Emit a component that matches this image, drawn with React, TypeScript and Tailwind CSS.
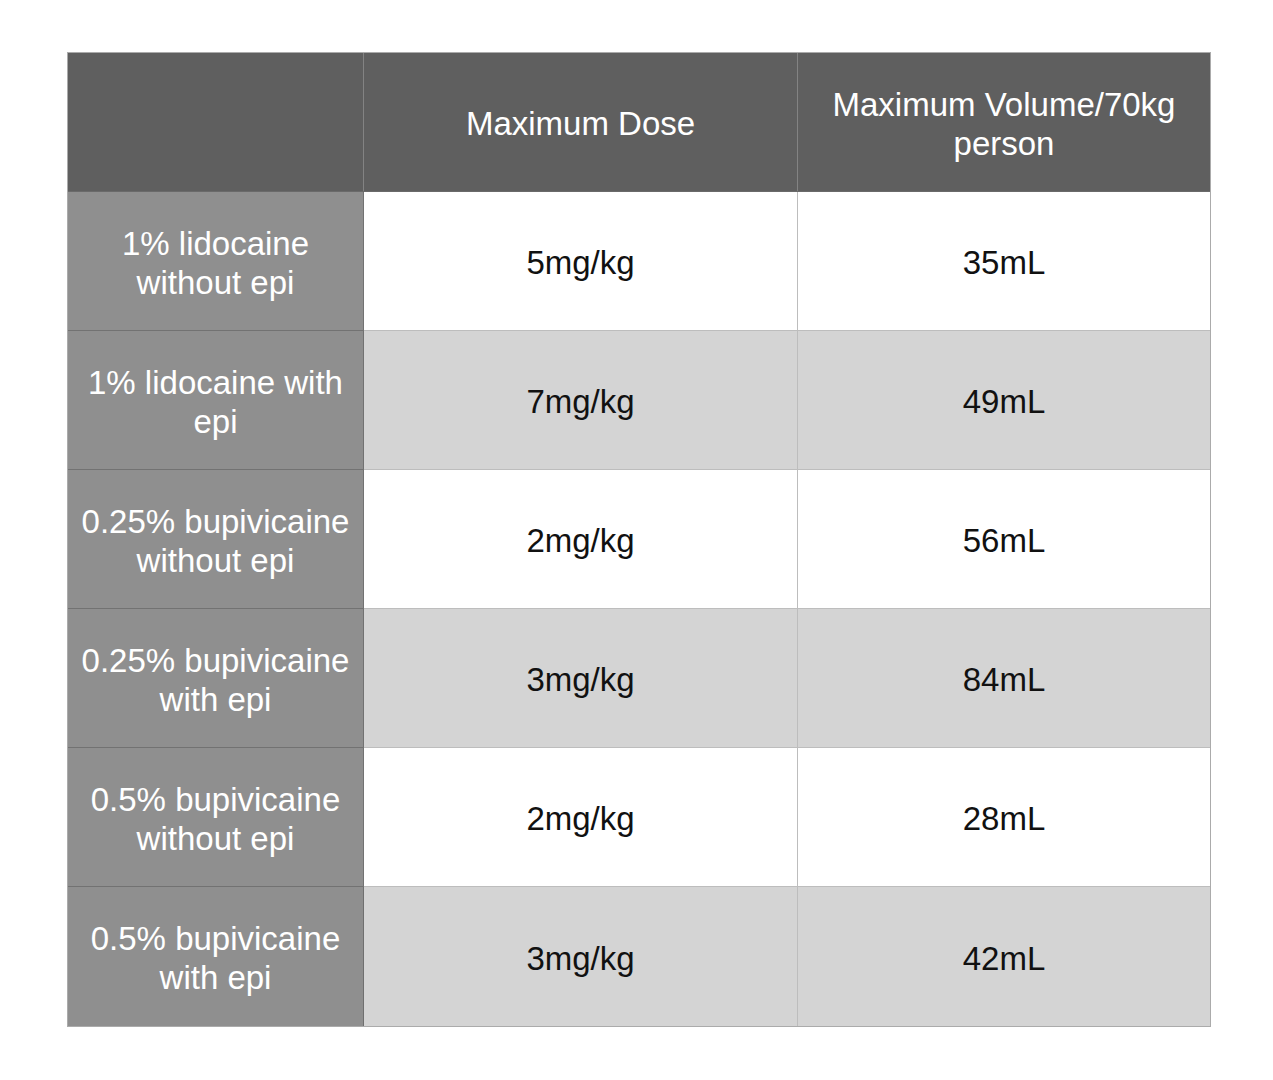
const rows = [
  { name: ['1% lidocaine', 'without epi'], dose: '5mg/kg', volume: '35mL' },
  { name: ['1% lidocaine with', 'epi'], dose: '7mg/kg', volume: '49mL' },
  { name: ['0.25% bupivicaine', 'without epi'], dose: '2mg/kg', volume: '56mL' },
  { name: ['0.25% bupivicaine', 'with epi'], dose: '3mg/kg', volume: '84mL' },
  { name: ['0.5% bupivicaine', 'without epi'], dose: '2mg/kg', volume: '28mL' },
  { name: ['0.5% bupivicaine', 'with epi'], dose: '3mg/kg', volume: '42mL' },
];

export default function App() {
  return (
    <div
      className="min-h-screen w-[1273px] h-[1080px] bg-white pt-[52px] pl-[67px]"
      style={{ fontFamily: '"Liberation Sans", Arial, sans-serif' }}
    >
      <div className="w-[1144px] border border-[#ababab] text-[33px] leading-[39px] text-center">
        {/* Header */}
        <div className="grid grid-cols-[296px_434px_1fr] h-[139px] bg-[#5f5f5f] text-white border-b border-[#6a6a6a]">
          <div className="border-r border-[#838383]" />
          <div className="flex items-center justify-center pt-[3px] border-r border-[#838383]">
            Maximum Dose
          </div>
          <div className="flex flex-col items-center justify-center pt-[3px] whitespace-nowrap">
            <span>Maximum Volume/70kg</span>
            <span>person</span>
          </div>
        </div>

        {/* Body */}
        {rows.map((row, i) => {
          const last = i === rows.length - 1;
          const striped = i % 2 === 1;
          return (
            <div key={i} className="grid grid-cols-[296px_434px_1fr] h-[139px]">
              <div
                className={`flex flex-col items-center justify-center pt-[3px] bg-[#8f8f8f] text-white whitespace-nowrap border-r border-[#6f6f6f] ${last ? '' : 'border-b border-[#727272]'}`}
              >
                <span>{row.name[0]}</span>
                <span>{row.name[1]}</span>
              </div>
              <div
                className={`flex items-center justify-center pt-[3px] text-[#111111] border-r border-[#bdbdbd] ${striped ? 'bg-[#d4d4d4]' : 'bg-white'} ${last ? '' : 'border-b border-b-[#bdbdbd]'}`}
              >
                {row.dose}
              </div>
              <div
                className={`flex items-center justify-center pt-[3px] text-[#111111] ${striped ? 'bg-[#d4d4d4]' : 'bg-white'} ${last ? '' : 'border-b border-[#bdbdbd]'}`}
              >
                {row.volume}
              </div>
            </div>
          );
        })}
      </div>
    </div>
  );
}
